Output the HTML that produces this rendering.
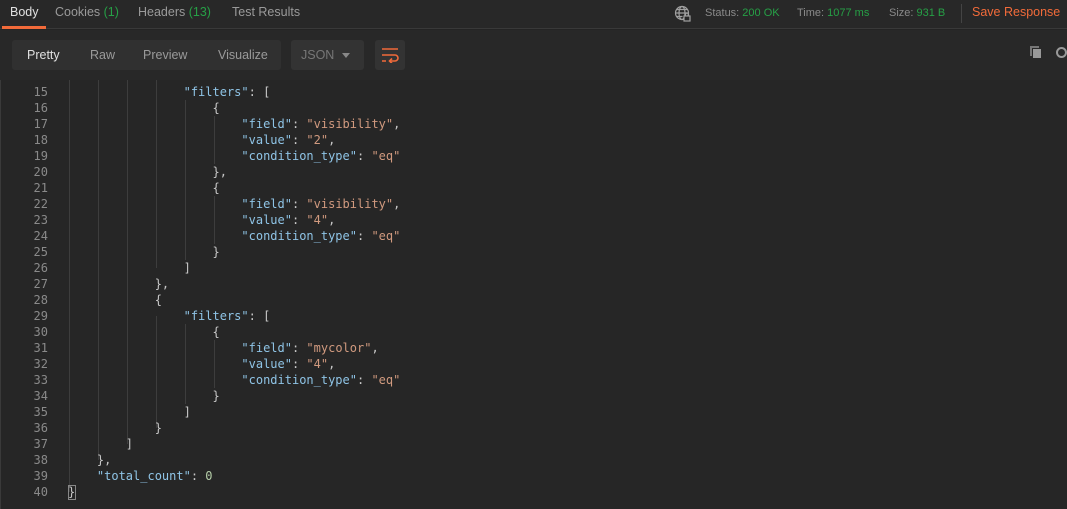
<!DOCTYPE html>
<html><head><meta charset="utf-8"><style>
*{margin:0;padding:0;box-sizing:border-box}
body{width:1067px;height:509px;background:#262626;overflow:hidden;position:relative;font-family:"Liberation Sans",sans-serif;}
.top{position:absolute;left:0;top:0;width:1067px;height:29px;background:#282828;border-bottom:1px solid #3a3a3a}
.tab{position:absolute;top:5px;font-size:12.5px;color:#9a9a9a}
.g{color:#26a046}
.tb{position:absolute;left:0;top:30px;width:1067px;height:50px;background:#282828;box-shadow:0 2px 3px rgba(0,0,0,.6)}
.grp{position:absolute;left:12px;top:10px;width:269px;height:30px;background:#303030;border-radius:3px}
.grp span{position:absolute;top:8px;font-size:12.5px;color:#9a9a9a}
.code{position:absolute;left:0;top:80px;width:1067px;height:429px;background:#262626;border-left:1px solid #3a3a3a}
.ln{position:absolute;height:16px;font:12px/16px "DejaVu Sans Mono",monospace;white-space:pre}
.num{left:12px;width:36px;text-align:right;color:#8a8a8a}
.tx{left:68px;color:#c8c8c8}
.k{color:#8fc4e6}.s{color:#d19a7f}.n{color:#b5cea8}
.gd{position:absolute;width:1px;background:#3d3d3d}
.st{position:absolute;top:7px;font-size:11px;color:#8a8a8a}
</style></head><body>
<div class="top">
<div class="tab" style="left:10px;color:#e0e0e0">Body</div>
<div style="position:absolute;left:2px;top:26px;width:44px;height:3px;background:#f26b3a"></div>
<div class="tab" style="left:55px">Cookies <span class="g">(1)</span></div>
<div class="tab" style="left:138px">Headers <span class="g">(13)</span></div>
<div class="tab" style="left:232px">Test Results</div>
<svg style="position:absolute;left:674px;top:5px" width="18" height="18" viewBox="0 0 18 18" fill="none" stroke="#a0a0a0" stroke-width="1.2"><circle cx="8" cy="8" r="6.5"/><ellipse cx="8" cy="8" rx="3" ry="6.5"/><path d="M1.5 8h13M2.5 4.5h11M2.5 11.5h6"/><rect x="10" y="11" width="6" height="5" fill="#282828"/><path d="M11.5 11v-1.5a1.5 1.5 0 0 1 3 0V11"/></svg>
<div class="st" style="left:705px">Status: <span class="g">200 OK</span></div>
<div class="st" style="left:797px">Time: <span class="g">1077 ms</span></div>
<div class="st" style="left:889px">Size: <span class="g">931 B</span></div>
<div style="position:absolute;left:961px;top:4px;width:1px;height:19px;background:#444"></div>
<div class="tab" style="left:972px;color:#f26b3a">Save Response</div>
</div>
<div class="tb">
<div class="grp"><span style="left:15px;color:#e0e0e0">Pretty</span><span style="left:78px">Raw</span><span style="left:131px">Preview</span><span style="left:206px">Visualize</span></div>
<div style="position:absolute;left:291px;top:10px;width:73px;height:30px;background:#333;border-radius:3px"><span style="position:absolute;left:10px;top:8px;font-size:12.5px;color:#777">JSON</span><span style="position:absolute;left:51px;top:13px;border-left:4px solid transparent;border-right:4px solid transparent;border-top:5px solid #888"></span></div>
<div style="position:absolute;left:375px;top:10px;width:30px;height:30px;background:#333;border-radius:3px">
<svg style="position:absolute;left:6px;top:7px" width="18" height="16" viewBox="0 0 18 16" fill="none" stroke="#f26b3a" stroke-width="1.6"><path d="M1 2h16M1 8h13a3 3 0 0 1 0 6H9M1 14h4"/><path d="M11 11.5l-2.5 2.5 2.5 2.5"/></svg></div>
<div style="position:absolute;left:1030px;top:16px;width:9px;height:10px;background:#777"></div>
<div style="position:absolute;left:1032px;top:18px;width:9px;height:10px;background:#999;border-left:1px solid #282828;border-top:1px solid #282828"></div>
<div style="position:absolute;left:1056px;top:17px;width:11px;height:11px;border:2px solid #999;border-radius:50%"></div>
</div>
<div class="code">
<div class="gd" style="left:68px;top:0;height:412px"></div>
<div class="gd" style="left:97px;top:0;height:380px"></div>
<div class="gd" style="left:126px;top:0;height:364px"></div>
<div class="gd" style="left:155px;top:0;height:188px"></div>
<div class="gd" style="left:155px;top:236px;height:112px"></div>
<div class="gd" style="left:184px;top:20px;height:160px"></div>
<div class="gd" style="left:184px;top:244px;height:80px"></div>
<div class="gd" style="left:213px;top:36px;height:48px"></div>
<div class="gd" style="left:213px;top:116px;height:48px"></div>
<div class="gd" style="left:213px;top:260px;height:48px"></div>
<div style="position:absolute;left:67px;top:405px;width:8px;height:15px;border:1px solid #888"></div>
</div>
<div style="position:absolute;left:0;top:84px;">
<div class="ln num" style="top:0">15</div><div class="ln tx" style="top:0">                <span class="k">"filters"</span>: [</div>
<div class="ln num" style="top:16px">16</div><div class="ln tx" style="top:16px">                    {</div>
<div class="ln num" style="top:32px">17</div><div class="ln tx" style="top:32px">                        <span class="k">"field"</span>: <span class="s">"visibility"</span>,</div>
<div class="ln num" style="top:48px">18</div><div class="ln tx" style="top:48px">                        <span class="k">"value"</span>: <span class="s">"2"</span>,</div>
<div class="ln num" style="top:64px">19</div><div class="ln tx" style="top:64px">                        <span class="k">"condition_type"</span>: <span class="s">"eq"</span></div>
<div class="ln num" style="top:80px">20</div><div class="ln tx" style="top:80px">                    },</div>
<div class="ln num" style="top:96px">21</div><div class="ln tx" style="top:96px">                    {</div>
<div class="ln num" style="top:112px">22</div><div class="ln tx" style="top:112px">                        <span class="k">"field"</span>: <span class="s">"visibility"</span>,</div>
<div class="ln num" style="top:128px">23</div><div class="ln tx" style="top:128px">                        <span class="k">"value"</span>: <span class="s">"4"</span>,</div>
<div class="ln num" style="top:144px">24</div><div class="ln tx" style="top:144px">                        <span class="k">"condition_type"</span>: <span class="s">"eq"</span></div>
<div class="ln num" style="top:160px">25</div><div class="ln tx" style="top:160px">                    }</div>
<div class="ln num" style="top:176px">26</div><div class="ln tx" style="top:176px">                ]</div>
<div class="ln num" style="top:192px">27</div><div class="ln tx" style="top:192px">            },</div>
<div class="ln num" style="top:208px">28</div><div class="ln tx" style="top:208px">            {</div>
<div class="ln num" style="top:224px">29</div><div class="ln tx" style="top:224px">                <span class="k">"filters"</span>: [</div>
<div class="ln num" style="top:240px">30</div><div class="ln tx" style="top:240px">                    {</div>
<div class="ln num" style="top:256px">31</div><div class="ln tx" style="top:256px">                        <span class="k">"field"</span>: <span class="s">"mycolor"</span>,</div>
<div class="ln num" style="top:272px">32</div><div class="ln tx" style="top:272px">                        <span class="k">"value"</span>: <span class="s">"4"</span>,</div>
<div class="ln num" style="top:288px">33</div><div class="ln tx" style="top:288px">                        <span class="k">"condition_type"</span>: <span class="s">"eq"</span></div>
<div class="ln num" style="top:304px">34</div><div class="ln tx" style="top:304px">                    }</div>
<div class="ln num" style="top:320px">35</div><div class="ln tx" style="top:320px">                ]</div>
<div class="ln num" style="top:336px">36</div><div class="ln tx" style="top:336px">            }</div>
<div class="ln num" style="top:352px">37</div><div class="ln tx" style="top:352px">        ]</div>
<div class="ln num" style="top:368px">38</div><div class="ln tx" style="top:368px">    },</div>
<div class="ln num" style="top:384px">39</div><div class="ln tx" style="top:384px">    <span class="k">"total_count"</span>: <span class="n">0</span></div>
<div class="ln num" style="top:400px">40</div><div class="ln tx" style="top:400px">}</div>
</div>
</body></html>
